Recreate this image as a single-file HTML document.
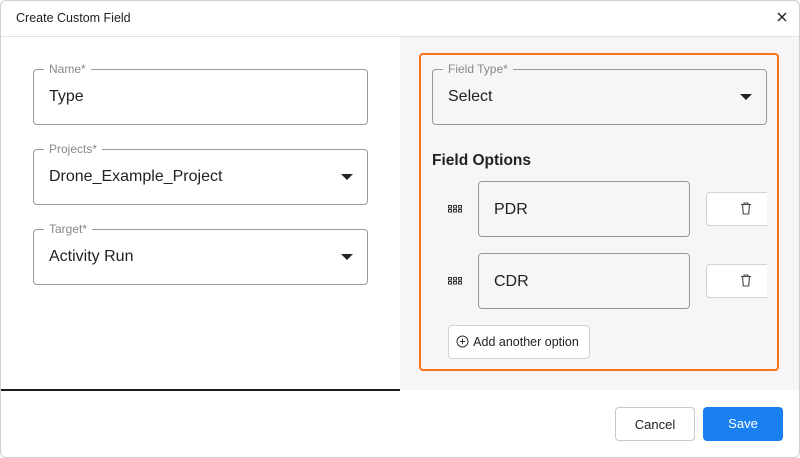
<!DOCTYPE html>
<html><head><style>
*{box-sizing:border-box;margin:0;padding:0}
body{width:800px;height:458px;overflow:hidden;background:#fff;font-family:"Liberation Sans",sans-serif;color:#222;position:relative}
.dlg{position:absolute;left:0;top:0;width:800px;height:458px;overflow:hidden;background:#fff;border-radius:6px}
.frame{position:absolute;left:0;top:0;width:800px;height:458px;border:1px solid #d0d0d0;border-radius:6px;pointer-events:none}
.a{position:absolute}
.hdr{left:0;top:0;width:800px;height:37px;border-bottom:1px solid #e2e2e2}
.title{left:16px;top:11px;font-size:12.5px;color:#222}
.right{left:400px;top:37px;width:400px;height:353px;background:#f6f6f8}
.line{left:0;top:389px;width:400px;height:1.5px;background:#1d1d1d}
.fld{position:absolute;border:1px solid #9a9a9a;border-radius:4px;height:56px}
.fld .lbl{position:absolute;left:10px;top:-8px;padding:0 5px;font-size:12px;color:#888;line-height:14px}
.fld .val{position:absolute;left:15px;top:18px;font-size:16px;color:#222}
.caret{position:absolute;right:14px;top:24px;width:0;height:0;border-left:6px solid transparent;border-right:6px solid transparent;border-top:6px solid #222}
.orange{left:419px;top:53px;width:360px;height:318px;border:2.5px solid #f97316;border-radius:4px}
.opt{position:absolute;border:1px solid #9a9a9a;border-radius:4px;width:212px;height:56px;left:478px}
.opt span{position:absolute;left:15px;top:19px;font-size:16px}
.tb{position:absolute;left:706px;width:61px;height:34px;border:1px solid #d2d2d2;border-right:none;border-radius:4px 0 0 4px;background:#fff}
.btn{position:absolute;border-radius:4px;font-size:13px;text-align:center;line-height:33px}
</style></head><body>
<div class="dlg">
<div class="a hdr"></div>
<div class="a title">Create Custom Field</div>
<svg class="a" style="left:777px;top:12px" width="10" height="10" viewBox="0 0 10 10"><path d="M1 1L9 9M9 1L1 9" stroke="#222" stroke-width="1.4"/></svg>
<div class="a right"></div>
<div class="a line"></div>

<div class="fld" style="left:33px;top:69px;width:335px"><div class="lbl" style="background:#fff">Name*</div><div class="val">Type</div></div>
<div class="fld" style="left:33px;top:149px;width:335px"><div class="lbl" style="background:#fff">Projects*</div><div class="val">Drone_Example_Project</div><div class="caret"></div></div>
<div class="fld" style="left:33px;top:229px;width:335px"><div class="lbl" style="background:#fff">Target*</div><div class="val">Activity Run</div><div class="caret"></div></div>

<div class="a orange"></div>
<div class="fld" style="left:432px;top:69px;width:335px"><div class="lbl" style="background:#f6f6f8">Field Type*</div><div class="val">Select</div><div class="caret"></div></div>
<div class="a" style="left:432px;top:152px;font-size:15.5px;font-weight:bold;color:#222">Field Options</div>

<svg class="a" style="left:448px;top:205px" width="14" height="8" viewBox="0 0 14 8"><g fill="none" stroke="#333" stroke-width="1"><rect x="0.5" y="0.5" width="3" height="2.5"/><rect x="5.5" y="0.5" width="3" height="2.5"/><rect x="10.5" y="0.5" width="3" height="2.5"/><rect x="0.5" y="4.5" width="3" height="2.5"/><rect x="5.5" y="4.5" width="3" height="2.5"/><rect x="10.5" y="4.5" width="3" height="2.5"/></g></svg>
<div class="opt" style="top:181px;background:#f6f6f8"><span>PDR</span></div>
<div class="tb" style="top:192px"></div>
<svg class="a" style="left:740px;top:202px" width="12" height="13" viewBox="0 0 12 13"><path d="M1 2.5H11M4 2.5V1H8V2.5M2.5 2.5L3.3 12H8.7L9.5 2.5" fill="none" stroke="#444" stroke-width="1.1"/></svg>

<svg class="a" style="left:448px;top:277px" width="14" height="8" viewBox="0 0 14 8"><g fill="none" stroke="#333" stroke-width="1"><rect x="0.5" y="0.5" width="3" height="2.5"/><rect x="5.5" y="0.5" width="3" height="2.5"/><rect x="10.5" y="0.5" width="3" height="2.5"/><rect x="0.5" y="4.5" width="3" height="2.5"/><rect x="5.5" y="4.5" width="3" height="2.5"/><rect x="10.5" y="4.5" width="3" height="2.5"/></g></svg>
<div class="opt" style="top:253px;background:#f6f6f8"><span>CDR</span></div>
<div class="tb" style="top:264px"></div>
<svg class="a" style="left:740px;top:274px" width="12" height="13" viewBox="0 0 12 13"><path d="M1 2.5H11M4 2.5V1H8V2.5M2.5 2.5L3.3 12H8.7L9.5 2.5" fill="none" stroke="#444" stroke-width="1.1"/></svg>

<div class="btn" style="left:448px;top:325px;width:142px;height:34px;border:1px solid #d2d2d2;background:#fff;font-size:12.5px;color:#222;padding-left:14px">Add another option</div>
<svg class="a" style="left:456px;top:335px" width="13" height="13" viewBox="0 0 13 13"><circle cx="6.5" cy="6.5" r="5.5" fill="none" stroke="#333" stroke-width="1"/><path d="M6.5 3.8V9.2M3.8 6.5H9.2" stroke="#333" stroke-width="1"/></svg>

<div class="btn" style="left:615px;top:407px;width:80px;height:34px;border:1px solid #c8c8c8;background:#fff;color:#222">Cancel</div>
<div class="btn" style="left:703px;top:407px;width:80px;height:34px;background:#1a80f0;color:#fff;line-height:34px">Save</div>
</div>
<div class="frame"></div>
</body></html>
